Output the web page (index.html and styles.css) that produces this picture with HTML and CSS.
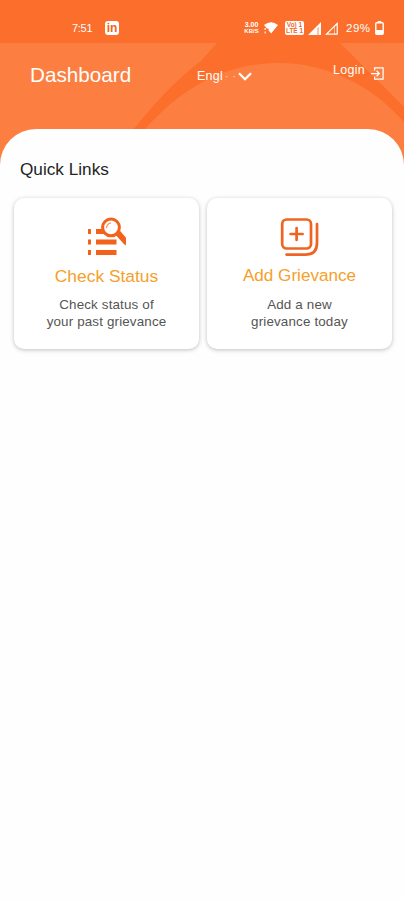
FILE: index.html
```
<!DOCTYPE html>
<html lang="en">
<head>
<meta charset="utf-8">
<title>Dashboard</title>
<link rel="stylesheet" href="styles.css">
</head>
<body>
<div class="hero">
  <svg class="hero-art" viewBox="0 0 404 180" aria-hidden="true">
    <path class="ring" d="M217 43L201 61Q170 84 133 130L105 160H125L145 129C184 86 226 63 280 63C327 63 373 86 404 122V107C384 87 365 68 340 43Z"/>
  </svg>
  <div class="status">
    <span class="time">7:51</span>
    <span class="linkedin">in</span>
    <div class="system">
      <span class="speed"><b>3.00</b><b>KB/S</b></span>
      <svg class="wifi" width="16" height="14" viewBox="0 0 16 14"><path fill="#fff" d="M1 4Q8-1.5 15 4L8.2 12.5L5.6 9.4V7.4H4L1 4Z"/><path stroke="#fff" stroke-width="1.2" d="M2.2 7v2M2.2 10.5v2"/></svg>
      <span class="volte"><b>Vo) 1</b><b>LTE 1</b></span>
      <svg class="sig1" width="13" height="13" viewBox="0 0 13 13"><path fill="#fff" d="M0 13L13 0V13H11V5L9 7V13Z"/><path fill="#ffc3a4" d="M9 7l2-2v8H9z"/></svg>
      <svg class="sig2" width="13" height="13" viewBox="0 0 13 13"><path fill="none" stroke="#fff" stroke-width="1.2" d="M1.5 12.2L12.2 1.5V12.2Z"/><path stroke="#fff" stroke-opacity=".5" d="M9.5 5v7"/></svg>
      <span class="percent">29%</span>
      <svg class="battery" width="9" height="14" viewBox="0 0 9 14"><path fill="#fff" d="M2.7 0h3.6v2H2.7z"/><rect x=".8" y="1.8" width="7.4" height="11.4" rx="1" fill="none" stroke="#fff" stroke-width="1.4"/><path fill="#fff" d="M1 9h7v4H1z"/></svg>
    </div>
  </div>
  <header class="bar">
    <h1>Dashboard</h1>
    <div class="language">Engl<span class="dots">· ·</span><svg width="14" height="9" viewBox="0 0 14 9"><path d="M1 1.2L7 7.2L13 1.2" fill="none" stroke="#fff" stroke-width="2.3"/></svg></div>
    <div class="login">Login<svg width="13" height="13" viewBox="0 0 13 13"><path d="M3.6 3.5V.9h8.5v11.2H3.6V9.5M0 6.5h8M5.6 3.8l2.7 2.7l-2.7 2.7" fill="none" stroke="#fff" stroke-width="1.25"/></svg></div>
  </header>
</div>
<main class="sheet">
  <h2>Quick Links</h2>
  <div class="cards">
    <section class="card">
      <svg class="icon" width="40" height="40" viewBox="0 0 40 40">
        <path fill="#f3621c" d="M1 12h3v5H1zM1 22.5h3v5H1zM1 33h3v5H1zM9 12h6v2l3 3H9zM9 22.5h20.5v5H9zM9 33h20.5v5H9z"/>
        <path d="M28.2 17.6L33.2 14L39 20.8V28.2L37.4 27.6Z" fill="#f3621c"/>
        <circle cx="24" cy="10.4" r="8.4" fill="#fff" stroke="#f3621c" stroke-width="3"/>
        <path d="M19.4 11.2Q19.7 6.6 24 5.8" fill="none" stroke="#f79462" stroke-width="1.2"/>
      </svg>
      <h3 class="status-title">Check Status</h3>
      <p>Check status of<br>your past grievance</p>
    </section>
    <section class="card">
      <svg class="icon" width="40" height="40" viewBox="0 0 40 40" fill="none" stroke="#ee6523" stroke-width="2.7" stroke-linecap="round">
        <rect x="2.2" y="2.5" width="28.8" height="29" rx="4.5"/>
        <path d="M16.6 11v12M10.6 17h12M37 7V26Q37 37.6 25.5 37.6H6.5"/>
      </svg>
      <h3 class="add-title">Add Grievance</h3>
      <p class="add-copy">Add a new<br>grievance today</p>
    </section>
  </div>
</main>
</body>
</html>
```
FILE: styles.css
```
* { box-sizing: border-box; }
body {
  margin: 0;
  height: 900px;
  overflow: hidden;
  background: #fefefe;
  font-family: "Liberation Sans", Arial, sans-serif;
}
svg { display: block; flex: none; }
h1, h2, h3, p { margin: 0; font-weight: 400; }
.hero {
  position: relative;
  height: 180px;
  color: #fff;
  background: #fc7e40;
}
.hero-art { position: absolute; inset: 0; width: 404px; height: 180px; }
.ring { fill: #fb6e2b; }
.status {
  position: relative;
  display: flex;
  align-items: center;
  height: 43px;
  padding: 13px 20px 0 72px;
  background: #fb6e2b;
}
.time { width: 33px; font-size: 11px; letter-spacing: -.3px; }
.linkedin {
  width: 14px;
  height: 14px;
  border-radius: 3px;
  background: #fff;
  color: #ef6424;
  font-size: 12px;
  font-weight: 700;
  line-height: 14px;
  text-align: center;
}
.system { display: flex; align-items: center; margin-left: auto; }
.speed, .volte { display: flex; flex-direction: column; text-align: center; white-space: nowrap; }
.speed { width: 17px; font-size: 7px; line-height: 6px; }
.speed b + b { font-size: 6px; }
.wifi { margin-left: 3px; }
.volte {
  width: 19px;
  height: 14px;
  margin-left: 6px;
  padding-top: 1px;
  border-radius: 2px;
  background: #fff;
  color: #ef6b32;
  font-size: 6.5px;
  line-height: 6px;
}
.sig1 { margin-left: 4px; }
.sig2 { margin-left: 4px; }
.percent { width: 27px; margin-left: 8px; font-size: 11.5px; letter-spacing: .5px; white-space: nowrap; }
.battery { margin-left: 2px; }
.bar { position: relative; display: flex; height: 86px; padding-left: 30px; }
.bar h1 { width: 167px; padding-top: 20px; font-size: 20.7px; line-height: 24px; }
.language {
  display: flex;
  width: 136px;
  padding-top: 26px;
  font-size: 12.5px;
  line-height: 15px;
  letter-spacing: .25px;
}
.language svg { margin-top: 3px; }
.dots { width: 15px; padding-left: 2px; opacity: .65; font-size: 11px; white-space: nowrap; }
.login { display: flex; padding-top: 20px; font-size: 12.5px; line-height: 15px; letter-spacing: .3px; }
.login svg { margin: 4px 0 0 6px; }
.sheet {
  position: relative;
  height: 771px;
  margin-top: -51px;
  padding: 29px 12px 0 14px;
  border-radius: 36px 36px 0 0;
  background: #fefefe;
}
.sheet h2 { padding-left: 6px; color: #242424; font-size: 17.2px; line-height: 22px; }
.cards { display: grid; grid-template-columns: 185px 185px; gap: 8px; margin-top: 18px; }
.card {
  display: flex;
  flex-direction: column;
  align-items: center;
  height: 151px;
  padding-top: 19px;
  border-radius: 10px;
  background: #fff;
  box-shadow: 0 1px 4px rgba(0, 0, 0, .25);
}
.card h3 { margin-top: 9px; color: #f5a02a; font-size: 17.4px; line-height: 20px; }
.card .add-title { font-size: 17.1px; }
.card p {
  margin-top: 10px;
  color: #555;
  font-size: 13.4px;
  line-height: 17px;
  letter-spacing: .15px;
  text-align: center;
}
```
